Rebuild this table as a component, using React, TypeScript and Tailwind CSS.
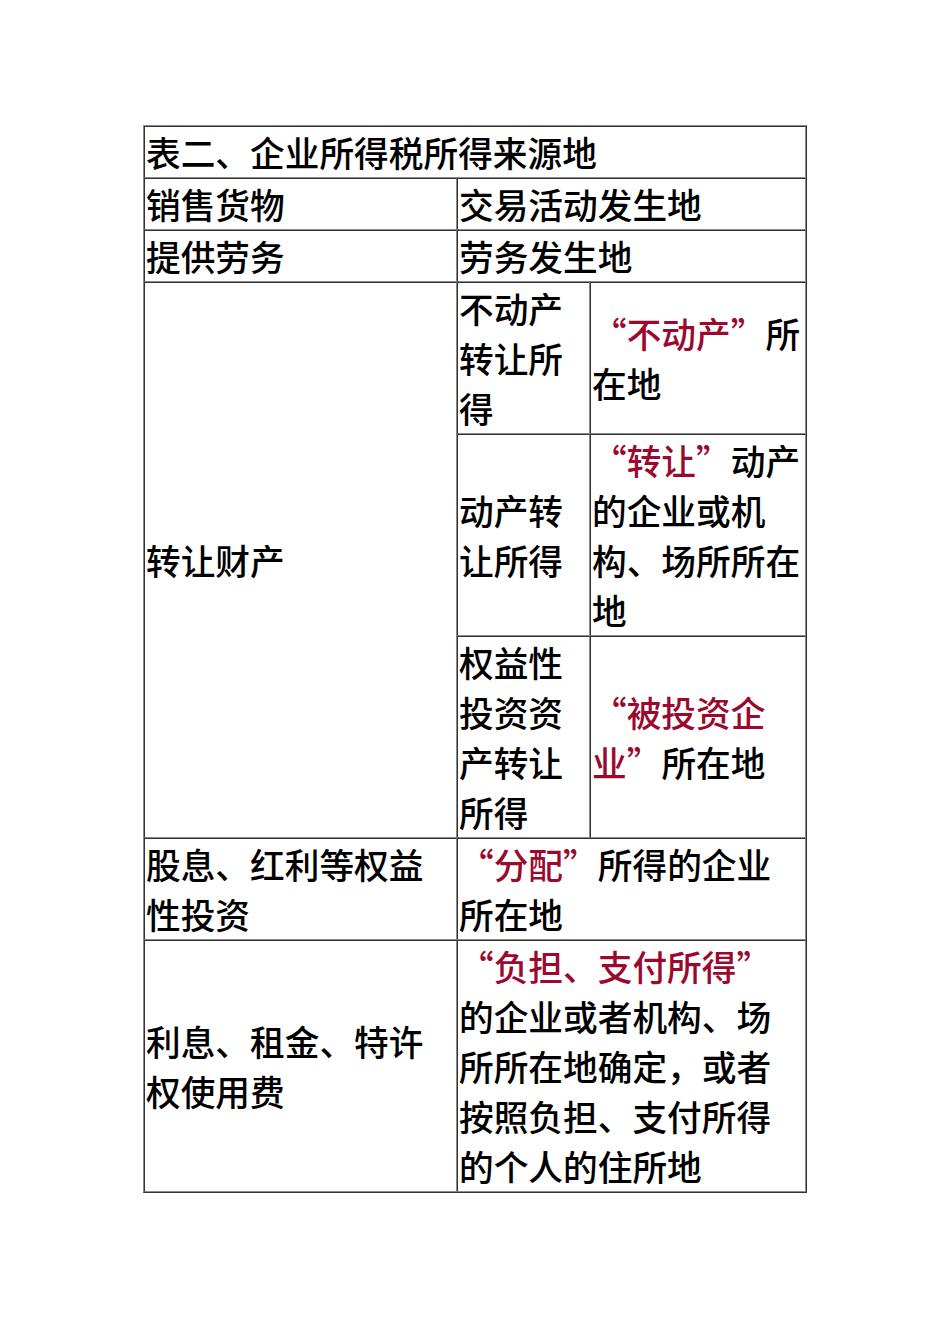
import React from "react";

const td =
  "py-0 px-px align-middle border border-solid border-t-[#333333] border-l-[#333333] border-b-[#8a8a8a] border-r-[#8a8a8a] break-all";

function R({ children }: { children: React.ReactNode }) {
  return <span className="text-[#9b0a2e]">{children}</span>;
}

export default function App() {
  return (
    <div className="bg-white w-[950px] min-h-[1344px] pt-[125px]">
      <table
        lang="zh-CN"
        className="mx-auto w-[664px] table-fixed border-separate border-spacing-0 border border-solid border-t-[#8a8a8a] border-l-[#8a8a8a] border-b-[#333333] border-r-[#333333] text-black font-medium text-[34.7px] leading-[50px]"
        style={{ fontFamily: '"Noto Sans CJK SC", sans-serif' }}
      >
        <colgroup>
          <col className="w-[313px]" />
          <col className="w-[133px]" />
          <col className="w-[216px]" />
        </colgroup>
        <tbody>
          <tr>
            <td colSpan={3} className={td}>
              表二、企业所得税所得来源地
            </td>
          </tr>
          <tr>
            <td className={td}>销售货物</td>
            <td colSpan={2} className={td}>
              交易活动发生地
            </td>
          </tr>
          <tr>
            <td className={td}>提供劳务</td>
            <td colSpan={2} className={td}>
              劳务发生地
            </td>
          </tr>
          <tr>
            <td rowSpan={3} className={td}>
              转让财产
            </td>
            <td className={td}>不动产转让所得</td>
            <td className={td}>
              <R>“不动产”</R>所在地
            </td>
          </tr>
          <tr>
            <td className={td}>动产转让所得</td>
            <td className={td}>
              <R>“转让”</R>动产的企业或机构、场所所在地
            </td>
          </tr>
          <tr>
            <td className={td}>权益性投资资产转让所得</td>
            <td className={td}>
              <R>“被投资企业”</R>所在地
            </td>
          </tr>
          <tr>
            <td className={td}>股息、红利等权益性投资</td>
            <td colSpan={2} className={td}>
              <R>“分配”</R>所得的企业所在地
            </td>
          </tr>
          <tr>
            <td className={td}>利息、租金、特许权使用费</td>
            <td colSpan={2} className={td}>
              <R>“负担、支付所得”</R>的企业或者机构、场所所在地确定，或者按照负担、支付所得的个人的住所地
            </td>
          </tr>
        </tbody>
      </table>
    </div>
  );
}
